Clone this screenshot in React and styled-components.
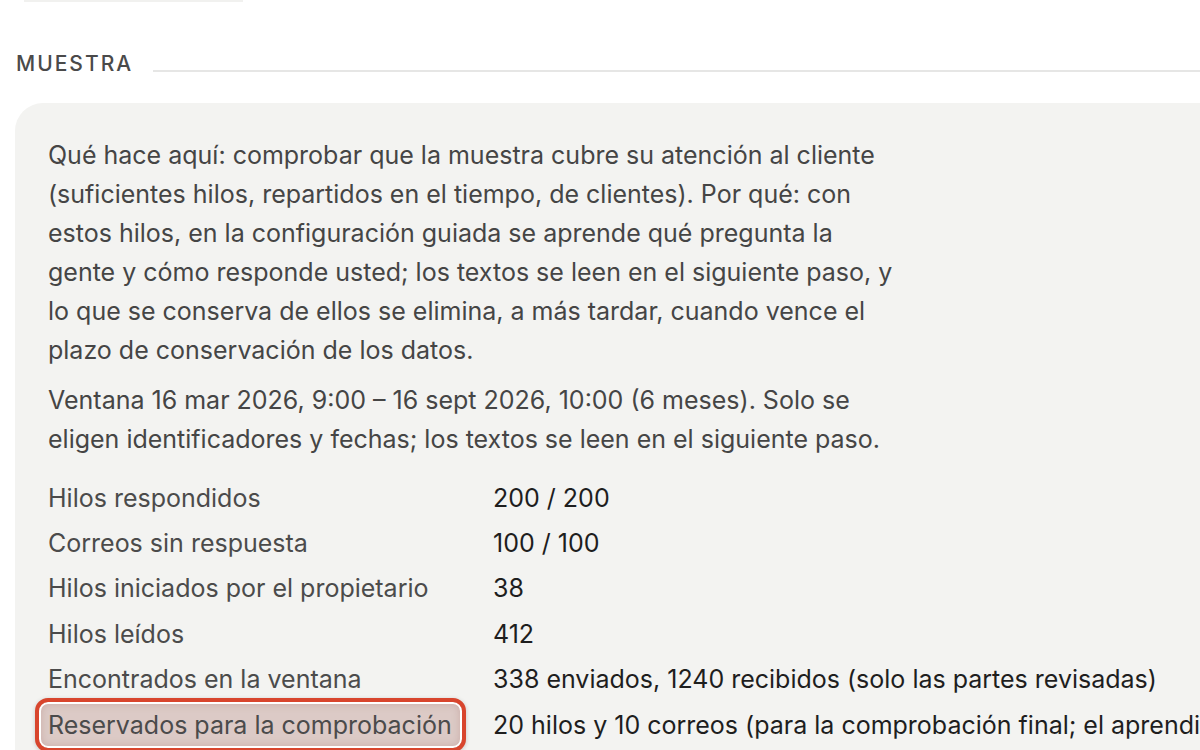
import React from "react";
import styled, { createGlobalStyle } from "styled-components";

const Global = createGlobalStyle`
  html, body { margin: 0; padding: 0; background: #ffffff; overflow: hidden; }
  body { width: 1200px; height: 750px; font-family: Inter, "Noto Sans", sans-serif; }
`;

const Page = styled.div`
  width: 1320px;
  padding-left: 16px;
  box-sizing: border-box;
`;

const TopRule = styled.div`
  width: 219px;
  height: 2px;
  margin-left: 8px;
  background: #f1f1ef;
`;

const SectionHead = styled.div`
  display: flex;
  align-items: center;
  gap: 20px;
  margin-top: 48px;
  height: 28px;
`;

const SectionTitle = styled.h2`
  margin: 0;
  font-size: 21px;
  font-weight: 500;
  letter-spacing: 2px;
  color: #4a4a4a;
  line-height: 28px;
`;

const SectionLine = styled.div`
  flex: 1;
  height: 2px;
  background: #e6e6e5;
  margin-top: 14px;
`;

const Panel = styled.section`
  margin-top: 25px;
  margin-left: -1px;
  background: #f3f3f1;
  border-radius: 28px;
  padding: 33px 0 40px 33px;
  min-height: 700px;
`;

const Para = styled.p`
  margin: 0 0 11px 0;
  max-width: 850px;
  font-size: 25px;
  line-height: 39px;
  color: #454545;
`;

const Facts = styled.dl`
  margin: 16px 0 0 0;
  display: grid;
  grid-template-columns: 445px auto;
  grid-auto-rows: 45.4px;
  align-items: center;
  font-size: 25px;
`;

const Term = styled.dt`
  margin: 0;
  color: #4b4b4b;
  white-space: nowrap;
`;

const Value = styled.dd`
  margin: 0;
  color: #1e1e1e;
  white-space: nowrap;
`;

const Marked = styled.span`
  position: relative;
  isolation: isolate;
  display: inline-block;
  &::before {
    content: "";
    position: absolute;
    top: -12px;
    bottom: -12px;
    left: -13px;
    right: -14px;
    z-index: -1;
    border: 4px solid #d8452d;
    border-radius: 13px;
    background: #dccac6;
    box-shadow: inset 0 0 0 2px #ffffff, inset 0 0 7px 3px rgba(170, 120, 110, 0.28),
      0 1px 4px rgba(0, 0, 0, 0.18);
  }
`;

const rows = [
  ["Hilos respondidos", "200 / 200"],
  ["Correos sin respuesta", "100 / 100"],
  ["Hilos iniciados por el propietario", "38"],
  ["Hilos leídos", "412"],
  ["Encontrados en la ventana", "338 enviados, 1240 recibidos (solo las partes revisadas)"],
  [
    "Reservados para la comprobación",
    "20 hilos y 10 correos (para la comprobación final; el aprendizaje no los utiliza)",
    true,
  ],
];

export default function App() {
  return (
    <>
      <Global />
      <Page>
        <TopRule />
        <SectionHead>
          <SectionTitle>MUESTRA</SectionTitle>
          <SectionLine />
        </SectionHead>
        <Panel>
          <Para>
            Qué hace aquí: comprobar que la muestra cubre su atención al cliente
            (suficientes hilos, repartidos en el tiempo, de clientes). Por qué: con
            estos hilos, en la configuración guiada se aprende qué pregunta la
            gente y cómo responde usted; los textos se leen en el siguiente paso, y
            lo que se conserva de ellos se elimina, a más tardar, cuando vence el
            plazo de conservación de los datos.
          </Para>
          <Para>
            Ventana 16 mar 2026, 9:00 – 16 sept 2026, 10:00 (6 meses). Solo se
            eligen identificadores y fechas; los textos se leen en el siguiente paso.
          </Para>
          <Facts>
            {rows.map(([t, v, mark]) => (
              <React.Fragment key={t}>
                <Term>{mark ? <Marked>{t}</Marked> : t}</Term>
                <Value>{v}</Value>
              </React.Fragment>
            ))}
          </Facts>
        </Panel>
      </Page>
    </>
  );
}
